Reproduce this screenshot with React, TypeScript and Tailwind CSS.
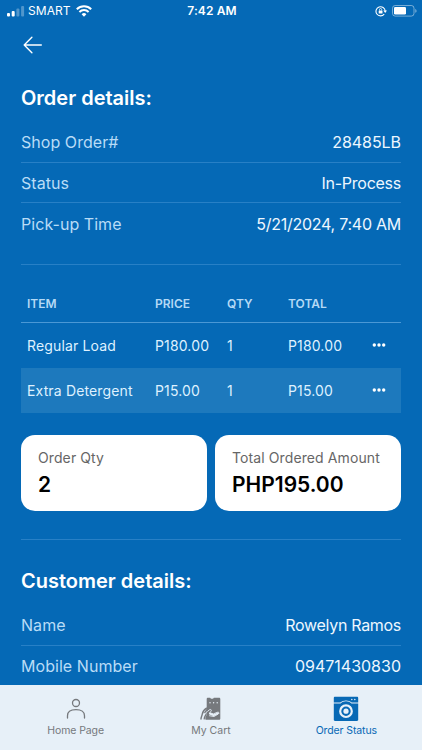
const orderRows = [
  { label: "Shop Order#", value: "28485LB", tracking: "tracking-[-0.05px]" },
  { label: "Status", value: "In-Process", tracking: "tracking-[-0.25px]" },
  { label: "Pick-up Time", value: "5/21/2024, 7:40 AM", tracking: "tracking-[-0.25px]" },
]

const customerRows = [
  { label: "Name", value: "Rowelyn Ramos", tracking: "tracking-[-0.3px]" },
  { label: "Mobile Number", value: "09471430830", tracking: "tracking-normal" },
]

const items = [
  { name: "Regular Load", price: "P180.00", qty: 1, total: "P180.00" },
  { name: "Extra Detergent", price: "P15.00", qty: 1, total: "P15.00" },
]

function StatusBar() {
  return (
    <div className="grid h-[22px] shrink-0 grid-cols-3 items-center pr-[5px] pl-[7px] text-white">
      <div className="flex items-center">
        <svg width="18" height="12" viewBox="0 0 18 12" fill="currentColor">
          <rect x="0" y="8" width="3" height="3.500" rx="1" />
          <rect x="4.700" y="6" width="3" height="5.500" rx="1" />
          <rect x="9.400" y="3.400" width="3" height="8.100" rx="1" opacity=".3" />
          <rect x="14.100" y="1" width="3" height="10.500" rx="1" opacity=".3" />
        </svg>
        <span className="ml-[3px] text-[12px] tracking-[0.05px]">SMART</span>
        <svg className="ml-[5px]" width="16" height="12" viewBox="0 0 16 12" fill="none" stroke="currentColor" strokeWidth="2">
          <path d="M.8 4.300a10.200 10.200 0 0 1 14.400 0" />
          <path d="M3.400 7a6.500 6.500 0 0 1 9.200 0" />
          <path d="M8 11.700 5.600 9.200a3.400 3.400 0 0 1 4.800 0Z" fill="currentColor" stroke="none" />
        </svg>
      </div>
      <span className="text-center text-[12px] font-semibold tracking-[0.1px]">7:42 AM</span>
      <div className="flex items-center justify-end">
        <svg width="12" height="12" viewBox="0 0 12 12" fill="none" stroke="currentColor">
          <path d="M9.200 9.200a4.600 4.600 0 1 1 1-3.200" strokeWidth="1.100" />
          <path d="M8.300 5.500h3.700l-1.800 2.500Z" fill="currentColor" stroke="none" />
          <rect x="3.700" y="5.400" width="3.800" height="3" rx=".5" fill="currentColor" stroke="none" />
          <path d="M4.500 5.500v-.9a1.100 1.100 0 0 1 2.200 0v.9" strokeWidth=".8" />
        </svg>
        <svg className="ml-[5px]" width="25" height="12" viewBox="0 0 25 12" fill="none">
          <rect x=".5" y=".5" width="21.500" height="10.600" rx="2.700" stroke="white" strokeOpacity=".45" />
          <rect x="2" y="2" width="12" height="7.600" rx="1.300" fill="white" />
          <path d="M23.300 4v3.800c.7-.3 1.200-1 1.200-1.900s-.5-1.600-1.200-1.900Z" fill="white" fillOpacity=".5" />
        </svg>
      </div>
    </div>
  )
}

function DetailRows({ rows }: { rows: { label: string; value: string; tracking: string }[] }) {
  return (
    <dl className="divide-y divide-[#2880c6] text-[16px]">
      {rows.map(row => (
        <div key={row.label} className="flex h-[40.7px] items-center justify-between">
          <dt className="tracking-[0.05px] text-[#b9dcf6]">{row.label}</dt>
          <dd className={`text-[#edf7ff] ${row.tracking}`}>{row.value}</dd>
        </div>
      ))}
    </dl>
  )
}

function ItemTable() {
  return (
    <table className="w-full table-fixed border-collapse text-left">
      <colgroup>
        <col className="w-[128px]" />
        <col className="w-[72px]" />
        <col className="w-[61px]" />
        <col className="w-[84px]" />
        <col />
      </colgroup>
      <thead>
        <tr className="h-[38px] border-b border-[#4b98d5] text-[12px] text-[#b4d9f5]">
          <th className="pt-[2px] pl-[6px] font-semibold">ITEM</th>
          <th className="pt-[2px] pl-[6px] font-semibold">PRICE</th>
          <th className="pt-[2px] pl-[6px] font-semibold">QTY</th>
          <th className="pt-[2px] pl-[6px] font-semibold">TOTAL</th>
          <th />
        </tr>
      </thead>
      <tbody className="text-[14px] tracking-[0.15px] text-[#dff1ff]">
        {items.map(item => (
          <tr key={item.name} className="h-[45px] even:bg-[#1d79bd]">
            <td className="pl-[6px] whitespace-nowrap">{item.name}</td>
            <td className="pl-[6px]">{item.price}</td>
            <td className="pl-[6px]">{item.qty}</td>
            <td className="pl-[6px]">{item.total}</td>
            <td className="pl-[6px]">
              <svg width="14" height="4" viewBox="0 0 14 4" fill="white">
                <circle cx="2.300" cy="2" r="1.700" />
                <circle cx="7" cy="2" r="1.700" />
                <circle cx="11.700" cy="2" r="1.700" />
              </svg>
            </td>
          </tr>
        ))}
      </tbody>
    </table>
  )
}

function SummaryCard({ label, value }: { label: string; value: string }) {
  return (
    <div className="h-[76px] rounded-[14px] bg-white pt-[12px] pl-[17px]">
      <p className="text-[14px] leading-[21px] tracking-[0.1px] whitespace-nowrap text-[#666]">{label}</p>
      <p className="mt-[3px] text-[21px] leading-[28px] font-semibold text-black">{value}</p>
    </div>
  )
}

function PersonIcon() {
  return (
    <svg width="20" height="22" viewBox="0 0 20 22" fill="none" stroke="currentColor" strokeWidth="1.300" strokeLinecap="round">
      <circle cx="10" cy="5" r="3.500" />
      <path d="M1.500 20v-2.200c0-4 3.100-6.100 8.500-6.100s8.500 2.100 8.500 6.100V20" />
    </svg>
  )
}

function CartIcon() {
  return (
    <svg width="24" height="24" viewBox="0 0 24 24" fill="none">
      <path d="M7.700 2c0-.7.5-1.200 1.200-1.200h2.300c.3 1.400 3.300 1.400 3.600 0h5.300c.7 0 1.200.5 1.200 1.200v19.400c0 .8-.5 1.300-1.200 1.300H6.500c-.5-1.600-.1-3.300 1.200-4.700Z" fill="currentColor" />
      <path d="M2 22c0-1.900.8-2.500 1.200-4.600.6-3.100 1.300-4.400 4.300-6.200" stroke="currentColor" strokeWidth="1.400" strokeLinecap="round" />
      <path d="M5.200 21.900c0-2 1.300-3.200 2-5M5.800 15.500l2.300-3" stroke="currentColor" strokeWidth="1.300" strokeLinecap="round" />
      <path d="m8.300 14.600 2.300-1.900c1.300-.8 2.200.5 1.400 1.500l-1.300 1.500 3.600 1.200 4-1.600c1.600-.6 2.300.9 1 1.700l-4.300 2.500-4.800-.8" stroke="#e8f1f9" strokeWidth=".9" strokeLinejoin="round" />
      <path d="m10.800 16.600 3.800 1.600 4.300-1.900" stroke="#e8f1f9" strokeWidth="1.800" strokeLinecap="round" />
      <g fill="#e8f1f9">
        <circle cx="11" cy="5.800" r=".7" />
        <circle cx="14.600" cy="5.800" r=".7" />
        <circle cx="18.200" cy="5.800" r=".7" />
      </g>
    </svg>
  )
}

function WasherIcon() {
  return (
    <svg width="26" height="26" viewBox="0 0 26 26" fill="none">
      <path d="M2 .7h22c.7 0 1.200.5 1.200 1.200v4.500h-6.400C15.800 3.700 10.200 3.700 7.200 6.400H.8V1.900C.8 1.200 1.300.7 2 .7Z" fill="currentColor" />
      <path d="M.8 7.500h6.800c2.700-3 8.100-3 10.800 0h6.800v16.300c0 .7-.5 1.200-1.200 1.200H2c-.7 0-1.200-.5-1.200-1.200Z" fill="currentColor" />
      <circle cx="13" cy="15.200" r="5.800" stroke="#e8f1f9" strokeWidth="2.200" />
      <circle cx="13" cy="15.200" r="2.600" fill="#e8f1f9" />
      <circle cx="18.800" cy="3.400" r=".75" fill="#e8f1f9" />
      <circle cx="21.800" cy="3.400" r=".75" fill="#e8f1f9" />
    </svg>
  )
}

function TabBar() {
  return (
    <nav className="grid h-[65px] shrink-0 grid-cols-3 bg-[#e7f0f8] px-[8px] text-[10.500px] tracking-[-0.1px] text-[#76797d]">
      <a className="flex flex-col items-center pt-[11px]">
        <span className="flex h-[26px] items-center"><PersonIcon /></span>
        <span className="mt-[1px] leading-[16px]">Home Page</span>
      </a>
      <a className="flex flex-col items-center pt-[11px]">
        <span className="flex h-[26px] items-center"><CartIcon /></span>
        <span className="mt-[1px] leading-[16px] tracking-normal">My Cart</span>
      </a>
      <a className="flex flex-col items-center pt-[11px] text-[#0869b5]">
        <span className="flex h-[26px] items-center"><WasherIcon /></span>
        <span className="mt-[1px] leading-[16px]">Order Status</span>
      </a>
    </nav>
  )
}

export default function App() {
  return (
    <div className="flex h-[750px] w-[422px] flex-col overflow-hidden bg-[#0569b6] font-['Inter',sans-serif]">
      <StatusBar />
      <main className="min-h-0 flex-1 overflow-hidden px-[21px]">
        <button className="mt-[14px] ml-[2px] block text-white" aria-label="Back">
          <svg width="20" height="18" viewBox="0 0 20 18" fill="none" stroke="currentColor" strokeWidth="1.400" strokeLinecap="round" strokeLinejoin="round">
            <path d="M18.300 9H1.200M8.900 1.300 1.200 9l7.700 7.700" />
          </svg>
        </button>

        <h2 className="mt-[30px] text-[20px] leading-[28px] font-semibold text-white">Order details:</h2>
        <div className="mt-[10px] border-b border-[#2880c6] pb-[20px]">
          <DetailRows rows={orderRows} />
        </div>

        <div className="mt-[19.500px]">
          <ItemTable />
        </div>

        <div className="mt-[22px] grid grid-cols-2 gap-[8px]">
          <SummaryCard label="Order Qty" value="2" />
          <SummaryCard label="Total Ordered Amount" value="PHP195.00" />
        </div>

        <h2 className="mt-[28px] border-t border-[#2880c6] pt-[27px] text-[20px] leading-[28px] font-semibold text-white">
          Customer details:
        </h2>
        <div className="mt-[10.500px]">
          <DetailRows rows={customerRows} />
        </div>
      </main>
      <TabBar />
    </div>
  )
}
